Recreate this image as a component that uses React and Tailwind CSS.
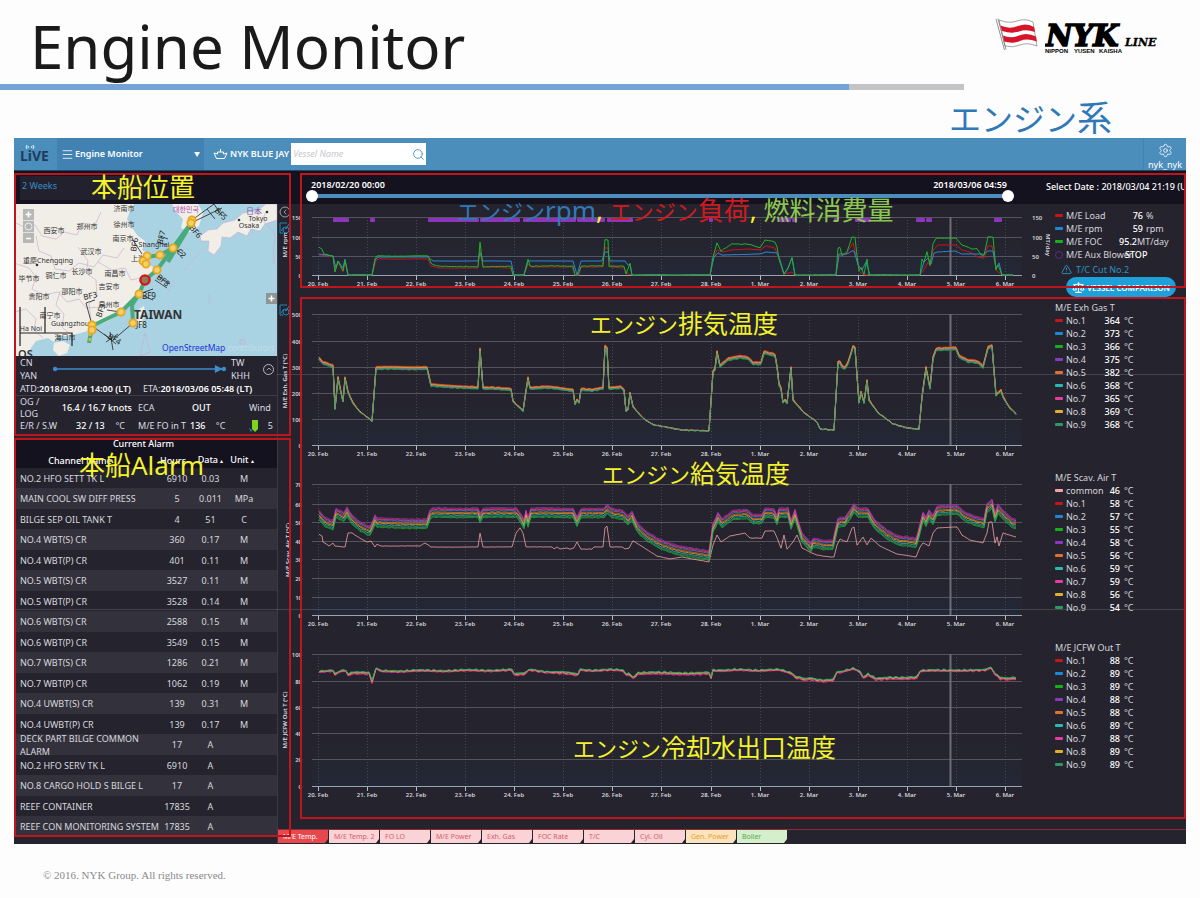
import React, { useState } from 'react';
import { ChevronLeft, ChevronUp, Menu, Scale, Search, Settings, TriangleAlert } from 'lucide-react';

const COLORS = ['#c4161c', '#1e88d8', '#17b01c', '#8a3ac0', '#e0702a', '#2ab8b0', '#e23c9c', '#e0b02c', '#2c9a66'];

const DAYS = [
  '20. Feb', '21. Feb', '22. Feb', '23. Feb', '24. Feb', '25. Feb', '26. Feb', '27. Feb',
  '28. Feb', '1. Mar', '2. Mar', '3. Mar', '4. Mar', '5. Mar', '6. Mar'
];

const ALARMS = [
  ['NO.2 HFO SETT TK L', '6910', '0.03', 'M'],
  ['MAIN COOL SW DIFF PRESS', '5', '0.011', 'MPa'],
  ['BILGE SEP OIL TANK T', '4', '51', 'C'],
  ['NO.4 WBT(S) CR', '360', '0.17', 'M'],
  ['NO.4 WBT(P) CR', '401', '0.11', 'M'],
  ['NO.5 WBT(S) CR', '3527', '0.11', 'M'],
  ['NO.5 WBT(P) CR', '3528', '0.14', 'M'],
  ['NO.6 WBT(S) CR', '2588', '0.15', 'M'],
  ['NO.6 WBT(P) CR', '3549', '0.15', 'M'],
  ['NO.7 WBT(S) CR', '1286', '0.21', 'M'],
  ['NO.7 WBT(P) CR', '1062', '0.19', 'M'],
  ['NO.4 UWBT(S) CR', '139', '0.31', 'M'],
  ['NO.4 UWBT(P) CR', '139', '0.17', 'M'],
  ['DECK PART BILGE COMMON ALARM', '17', 'A', ''],
  ['NO.2 HFO SERV TK L', '6910', 'A', ''],
  ['NO.8 CARGO HOLD S BILGE L', '17', 'A', ''],
  ['REEF CONTAINER', '17835', 'A', ''],
  ['REEF CON MONITORING SYSTEM', '17835', 'A', '']
];

const TABS = ['M/E Temp.', 'M/E Temp. 2', 'FO LO', 'M/E Power', 'Exh. Gas', 'FOC Rate', 'T/C', 'Cyl. Oil', 'Gen. Power', 'Boiler'];

const RPM = '319,254 333,256 336,268 338,261 343,268 345,259 348,275 372,275 375,260 378,257 428,257 433,261 478,261 480,253 483,261 511,261 514,275 524,275 528,261 573,261 577,275 581,261 602,261 605,252 608,252 610,261 625,261 628,265 630,265 632,275 710,275 714,257 718,253 722,255 760,254 766,252 777,253 780,260 784,274 788,268 792,258 795,275 836,275 839,254 847,254 852,251 854,251 858,265 862,270 866,262 870,275 920,275 924,262 928,258 931,264 934,253 938,252 955,251 962,254 984,254 988,251 993,251 996,268 999,263 1002,275 1013,275';
const LOAD = '319,255 333,256 335,272 338,262 343,272 345,262 348,275 372,275 376,260 380,259 428,259 431,266 440,268 478,268 480,250 483,267 511,268 513,275 524,275 528,264 531,267 572,267 575,275 579,275 581,267 602,267 605,248 608,248 610,267 624,268 628,274 632,275 710,275 713,258 717,250 722,252 732,250 748,249 760,250 766,246 775,248 778,256 784,274 792,272 795,275 836,275 839,256 846,254 853,243 856,256 860,272 864,275 920,275 924,270 928,262 930,266 933,250 938,245 956,245 962,250 970,252 978,257 984,258 988,246 992,246 996,270 1002,275 1013,275';
const FOC = '319,247 322,249 324,254 333,256 335,272 338,261 343,271 345,260 348,275 372,275 375,259 377,256 428,256 431,263 433,265 440,266 478,267 480,242 483,267 511,266 513,275 524,275 528,259 530,266 573,266 575,275 578,275 581,266 603,266 605,240 608,240 609,266 624,266 626,274 630,263 632,275 710,275 713,257 717,243 721,251 732,244 748,244 760,248 765,240 775,242 777,247 779,259 784,274 788,269 792,257 795,275 836,275 838,248 840,247 842,256 847,252 852,237 855,237 857,256 859,271 861,267 864,275 867,259 869,275 920,275 922,259 924,262 927,252 930,265 933,244 936,238 956,238 962,245 972,249 977,249 981,255 984,255 988,237 993,237 996,270 998,265 1002,275 1013,275';
const EXH = '319,358 323,363 333,366 335,409 338,378 343,402 345,378 348,392 353,403 360,412 372,421 376,368 427,368 431,385 478,388 480,349 483,388 511,389 513,401 523,411 528,378 530,388 545,387 573,390 575,404 577,400 579,403 581,389 592,390 603,388 605,347 607,348 609,388 621,387 624,390 626,411 628,410 630,393 633,407 643,418 653,425 670,428 683,430 709,431 713,372 715,369 717,352 720,366 728,359 740,357 748,358 753,363 761,363 764,352 775,355 777,367 779,384 781,388 783,403 785,400 787,403 791,368 793,400 803,412 817,422 820,429 834,430 838,362 840,362 842,367 845,368 848,363 853,347 855,348 859,403 861,392 864,403 867,381 869,400 878,413 893,424 907,428 919,429 922,397 923,390 926,368 930,388 933,358 936,349 956,348 959,356 968,361 978,362 983,367 988,348 992,346 996,395 1001,390 1003,397 1010,408 1016,414';
const COMMON = '319,534 322,536 323,542 329,546 333,543 335,546 345,547 348,533 352,533 358,537 367,542 371,541 375,547 377,544 380,546 420,546 425,543 431,547 478,547 480,533 483,547 512,547 516,533 520,528 523,533 526,547 552,547 554,549 557,547 560,549 567,548 570,549 574,548 577,542 581,549 592,549 594,547 603,547 605,528 607,526 610,547 622,547 625,549 629,548 633,541 643,547 657,556 670,559 682,557 709,562 713,545 717,535 721,542 730,536 745,533 750,538 762,538 765,531 774,531 777,538 781,548 784,535 787,549 793,542 797,535 802,548 812,553 817,555 830,557 834,557 837,545 840,539 847,542 852,528 854,527 857,545 863,537 867,545 871,538 880,546 897,554 916,557 920,547 923,543 929,546 933,533 937,528 957,527 962,535 970,540 983,543 987,533 989,522 992,522 995,543 997,537 999,546 1003,533 1016,537';
const SCAV = '319,515 325,522 333,525 336,513 344,517 347,512 352,520 360,527 370,531 375,520 377,523 427,524 430,515 433,513 478,513 480,518 483,513 513,513 516,512 522,520 524,525 526,515 528,522 531,513 573,513 577,522 581,513 604,513 607,509 612,513 623,515 628,521 632,516 637,527 647,537 660,544 677,550 709,556 713,528 718,518 722,523 733,515 747,514 753,519 762,519 765,513 774,514 777,521 779,513 788,513 791,525 795,514 798,525 802,538 811,548 813,543 823,545 833,545 838,523 845,522 850,515 854,508 858,513 868,513 875,525 887,535 900,541 916,543 918,537 923,517 926,522 929,515 933,520 937,511 957,510 965,517 977,522 984,523 987,508 992,504 995,517 998,509 1005,517 1012,523 1016,524';
const JCFW = '319,671 333,670 335,674 339,671 346,671 348,675 351,673 369,673 372,681 376,668 380,671 512,670 514,674 524,674 529,670 578,674 580,670 623,670 626,674 629,673 633,678 638,673 709,673 711,677 713,670 780,670 790,672 796,677 803,679 812,678 817,680 833,680 837,672 853,669 860,671 863,677 868,674 876,679 890,678 917,677 920,671 950,670 985,670 991,668 995,673 1000,678 1016,678';

const AUX_RUNS = [
  [333, 349], [370, 375], [428, 479], [480, 520], [523, 576], [577, 605], [607, 633], [709, 713], [778, 791],
  [792, 797], [834, 837], [855, 871], [916, 925], [926, 932], [994, 1002]
];

const parse = (text) => text.split(' ').map(p => p.split(',').map(Number));

// Fill long straight runs with extra samples so the sensor noise shows
const trace = (text, shift, noise, seed) => {
  const pts = parse(text);
  const out = [];
  pts.forEach(([x, y], i) => {
    const next = pts[i + 1];
    const steps = next ? Math.max(1, Math.round((next[0] - x) / 3)) : 1;
    for (let k = 0; k < steps; k++) {
      const px = next ? x + ((next[0] - x) * k) / steps : x;
      const py = next ? y + ((next[1] - y) * k) / steps : y;
      const n = Math.sin(px * 1.7) * Math.cos(px * 0.53) + 0.5 * Math.sin(px * 0.9 + seed * 2);
      out.push(`${px.toFixed(1)},${(py + shift(py) + n * noise).toFixed(1)}`);
    }
  });
  return out.join(' ');
};

const EXH_SHIFT = [-1.8, 0, 1.6, 0.8, -1.3, 0.6, 0.2, -0.6, 1];
const SCAV_SHIFT = [-4, -2.5, 4.5, -5, -0.8, 2, -3.5, 0.4, 3.5];
const JCFW_SHIFT = [1.1, 0.4, -0.2, 0.7, 0.2, -0.3, 0.8, 0, -0.5];

const exhLines = EXH_SHIFT.map((s, i) => ({
  color: COLORS[i],
  points: trace(EXH, y => s * Math.max(0.1, Math.min(1, (425 - y) / 45)), 0.5, i)
}));

const scavLines = [
  { color: '#f4a0a4', points: trace(COMMON, () => 0, 0.2, 1) },
  ...SCAV_SHIFT.map((s, i) => ({ color: COLORS[i], points: trace(SCAV, () => s, 0.6, i) }))
];

const jcfwLines = JCFW_SHIFT.map((s, i) => ({
  color: COLORS[i],
  points: trace(JCFW, y => (y > 672 ? s * 1.6 : s), 0.9, i)
}));

const mainLines = [
  { color: '#c4161c', points: trace(LOAD, () => 0, 0.2, 1) },
  { color: '#2f86d6', points: trace(RPM, () => 0, 0.1, 2) },
  { color: '#1fb526', points: trace(FOC, () => 0, 0.4, 3) }
];

const Chart = ({ top, height, ticks, lines, title, titleX, titleY, children }) => {
  const first = ticks[0][1];
  const base = ticks[ticks.length - 1][1];
  return (
    <svg viewBox={`277 ${top} 773 ${height}`} className="block min-w-0 flex-1" role="img" aria-label={title}>
      <defs>
        <linearGradient id={`fade${top}`} x1="0" y1="0" x2="0" y2="1">
          <stop offset="0" stopColor="#232734" stopOpacity="0" />
          <stop offset="1" stopColor="#22293a" stopOpacity="0.7" />
        </linearGradient>
      </defs>
      <rect x="312" y={base - 45} width="709" height="45" fill={`url(#fade${top})`} />
      {DAYS.map((day, i) => {
        const x = 318 + Math.round(i * 49.07);
        return (
          <g key={day}>
            <line x1={x + 0.5} x2={x + 0.5} y1={first} y2={base} stroke="#484752" strokeDasharray="1 2" />
            <line x1={x + 0.5} x2={x + 0.5} y1={base} y2={base + 5} stroke="#b4bac6" />
            <text x={x} y={base + 11} fontSize="6" fontWeight="600" fill="#d4d4da" textAnchor="middle">{day}</text>
          </g>
        );
      })}
      {ticks.map(([label, y]) => (
        <g key={label}>
          <line x1="312" x2="1022" y1={y + 0.5} y2={y + 0.5} stroke={y === base ? '#9aa2b2' : '#54535e'} />
          <text x="302" y={y + 3} fontSize="6" fontWeight="600" fill="#d4d4da" textAnchor="end">{label}</text>
        </g>
      ))}
      <line x1="950.5" x2="950.5" y1={first} y2={base} stroke="#6c6c76" strokeWidth="2" />
      {lines.map((line, i) => (
        <polyline key={i} points={line.points} fill="none" stroke={line.color} strokeWidth={lines.length > 3 ? 0.8 : 1} strokeLinejoin="round" />
      ))}
      <text transform={`translate(${titleX} ${titleY}) rotate(-90)`} fontSize="6" fontWeight="600" fill="#dcdce2" textAnchor="middle">{title}</text>
      {children}
    </svg>
  );
};

// Small "add chart" mark in the gutter
const GutterIcon = ({ y }) => (
  <g fill="none" stroke="#1c86b8" strokeWidth="1">
    <path d={`M287 ${y} h-7 v10 h3 M281 ${y + 8} l3 -4 2 2 3 -5`} />
    <circle cx="286" cy={y + 7} r="3" />
  </g>
);

const Swatch = ({ color }) => (
  <span className="h-[3px] w-2 shrink-0 rounded-[1px]" style={{ backgroundColor: color }} />
);

const TempLegend = ({ title, rows }) => (
  <div className="w-[136px] shrink-0 pt-[3px] pl-[5px] text-[9px] leading-[13px] text-[#d6d6dc]">
    <div>{title}</div>
    <ul>
      {rows.map(([name, value, color]) => (
        <li key={name} className="flex items-center">
          <Swatch color={color} />
          <span className="w-10 pl-[3px]">{name}</span>
          <span className="w-[17px] text-right font-medium text-white">{value}</span>
          <span className="pl-1">°C</span>
        </li>
      ))}
    </ul>
  </div>
);

const numbered = (values) => values.map((v, i) => [`No.${i + 1}`, v, COLORS[i]]);

const MainLegend = () => (
  <div className="w-[136px] shrink-0 pt-[5px] pl-[5px] text-[9px] leading-[13px] whitespace-nowrap text-[#d6d6dc]">
    {[
      ['M/E Load', '76', '%', '#c4161c', 'w-[28px] mr-[3px]'],
      ['M/E rpm', '59', 'rpm', '#1e88d8', 'w-[28px] mr-[3px]'],
      ['M/E FOC', '95.2', 'MT/day', '#17b01c', 'w-[22px]']
    ].map(([name, value, unit, color, valueClass]) => (
      <div key={name} className="flex items-center">
        <Swatch color={color} />
        <span className="w-[52px] pl-[3px]">{name}</span>
        <span className={`text-right font-medium text-white ${valueClass}`}>{value}</span>
        <span>{unit}</span>
      </div>
    ))}
    <div className="flex items-center">
      <span className="size-2 shrink-0 rounded-full border border-[#5a2d86]" />
      <span className="w-[62px] pl-[3px]">M/E Aux Blower</span>
      <span className="font-medium text-white">STOP</span>
    </div>
    <div className="flex h-4 items-center gap-1 pl-[6px] text-[#2a93c4]">
      <TriangleAlert size={11} strokeWidth={2} />
      T/C Cut No.2
    </div>
    <button className="ml-[11px] flex h-5 w-[110px] items-center gap-[2px] overflow-hidden rounded-full bg-[#1ea0da] pl-[6px] text-[8px] font-semibold text-white">
      <Scale size={13} strokeWidth={2} className="shrink-0" />
      VESSEL COMPARISON
    </button>
  </div>
);

// Slide note: kana are set smaller than kanji
const Note = ({ kana, text, className = '' }) => (
  <div className={`pointer-events-none absolute z-20 leading-8 whitespace-nowrap text-[#f4f22c] ${className}`}>
    {kana && <span className="text-[22px]">{kana}</span>}{text}
  </div>
);

const Frame = ({ className }) => (
  <div className={`pointer-events-none absolute z-10 border-2 border-[#c0151d] ${className}`} />
);

const CITIES = [
  ['西安市', 54, 233], ['郑州市', 87, 229], ['徐州市', 124, 227], ['南京市', 123, 241], ['武汉市', 91, 254],
  ['重慶Chengqing', 48, 263], ['长沙市', 82, 274], ['南昌市', 115, 276], ['铜仁市', 56, 278], ['毕节市', 29, 281],
  ['吉安市', 109, 289], ['邵阳市', 72, 294], ['贵阳市', 39, 299], ['泉州市', 109, 307], ['南宁市', 50, 318],
  ['Guangzhou', 70, 326], ['海口市', 65, 340], ['Ha Noi', 31, 331], ['济南市', 124, 211], ['上海', 138, 261],
  ['Shanghai', 154, 247]
];

const STOPS = [
  [192, 220], [191, 223], [173, 248], [160, 255], [147, 256], [143, 261], [146, 264], [157, 270], [139, 294],
  [121, 312], [133, 323], [92, 325], [92, 330]
];

const VoyageMap = () => (
  <svg viewBox="14 204 263 152" className="block w-full" role="img" aria-label="Map">
    <rect x="14" y="204" width="263" height="152" fill="#a9d2e2" />
    <path d="M14 204 H134 L130 211 127 219 132 228 138 236 145 241 142 250 148 253 143 262 153 267 152 276 144 286 139 294 131 305 122 312 108 321 96 326 88 331 77 334 66 336 58 336 54 342 48 338 36 341 31 348 26 356 H14 Z" fill="#f1eee8" />
    <path d="M54 343 l9 -2 7 4 -3 8 -8 3 -6 -6z M172 204 h26 l5 9 -4 13 -9 6 -9 -4 2 -9 -7 -7z M139 309 l5 -3 1 7 -4 13 -4 -7z" fill="#f1eee8" />
    <path d="M200 236 l8 -6 9 -1 6 -6 12 -3 8 -7 14 -2 9 -7 h11 v16 l-12 4 -5 7 -9 -2 -4 7 -9 -4 -8 6 -8 -1 -1 9 -7 9 -6 -4 1 -10 -8 0z" fill="#f1eee8" stroke="#c3a5cf" strokeWidth="0.5" />
    <g fill="none" stroke="#c9b0cf" strokeWidth="0.7">
      <path d="M14 222 l12 6 9 -3 7 11 14 3 8 -7 13 3 5 -12 13 2 6 -13" />
      <path d="M36 236 l3 15 12 5 4 13 14 2 10 -8 15 4 9 -12 14 3 7 -10" />
      <path d="M14 263 l15 5 7 9 -4 12 12 6 14 -3 9 10 12 -3 7 9 15 -1" />
      <path d="M78 247 l10 14 -2 12 10 7 1 16 -8 8 2 16 M98 262 l14 8 13 -2 6 12 14 -3" />
      <path d="M14 312 l12 -3 10 10 -2 11 9 8 M60 291 l-4 14 8 9 -2 13 9 8" />
      <path d="M266 212 q-6 9 3 15 q9 7 4 21 l1 16 M140 356 l5 -23 5 19z M207 293 q5 4 1 10 M240 340 h5 v4 h-5z" />
      <path d="M185 270 q9 -14 21 -22 M168 292 q5 -11 10 -17" strokeDasharray="3 2" />
    </g>
    <path d="M20 307 V346 M20 333 H72 V346 M45 307 V333" stroke="#222" strokeWidth="1.2" fill="none" />
    <g fill="none" stroke="#44a878" strokeWidth="4" strokeLinejoin="round" opacity="0.95">
      <path d="M192 222 L173 248 160 255 147 257" />
      <path d="M192 222 L157 270 145 280 139 294 121 312 92 326 89 343" />
      <path d="M139 294 L132 305 133 323" />
      <path d="M192 222 L168 262" />
    </g>
    <g stroke="#222" strokeWidth="0.8" fill="none">
      <path d="M192 220 L214 204 M193 222 L222 208 M214 204 l8 12 M207 209 l8 10 M92 325 l-6 -22 9 -3 M92 326 l20 14 M133 323 l-20 17 M139 294 l14 6 M139 294 l14 -5 M121 312 l-14 -2 M142 254 l-9 -14 M173 248 l10 6" />
      <path d="M104 334 l12 10 M106 342 l12 -8 M110 332 l3 18 M155 280 l12 8 M158 276 l12 8 M160 236 l8 3 M158 242 l8 3" />
    </g>
    <g fontSize="8" fill="#222">
      <text x="84" y="300" transform="rotate(-12 84 300)">BF3</text>
      <text x="136" y="252" transform="rotate(-80 136 252)">BF6</text>
      <text x="189" y="228" transform="rotate(50 189 228)">BF6</text>
      <text x="214" y="211" transform="rotate(45 214 211)">BF5</text>
      <text x="156" y="278" transform="rotate(40 156 278)">BF8</text>
      <text x="176" y="252" transform="rotate(45 176 252)">C2</text>
      <text x="157" y="238" transform="rotate(-75 164 238)">BF7</text>
      <text x="101" y="318" transform="rotate(-70 101 318)">BF3</text>
      <text x="107" y="338" transform="rotate(30 107 338)">BF4</text>
      <text x="136" y="328">JF8</text>
      <text x="142" y="299">BF9</text>
    </g>
    <g fontSize="7" fill="#333" textAnchor="middle">
      {CITIES.map(([name, x, y]) => <text key={name} x={x} y={y}>{name}</text>)}
      <text x="258" y="221">Tokyo</text>
      <text x="249" y="228">Osaka</text>
      <text x="254" y="214" fontSize="8" fill="#8a5aa8">日本</text>
      <text x="186" y="212" fontSize="7" fill="#b04fb0">대한민국</text>
    </g>
    <g fill="#333">
      <circle cx="239" cy="220" r="1.3" /><circle cx="267" cy="212" r="1.3" /><circle cx="37" cy="265" r="1.3" />
    </g>
    <text x="134" y="319" fontSize="12" fontWeight="700" fill="#333">TAIWAN</text>
    <text x="18" y="358" fontSize="11" fontWeight="600" fill="#333">OS</text>
    {STOPS.map(([x, y]) => (
      <circle key={`${x}-${y}`} cx={x} cy={y} r="3.6" fill="#f6cf6a" stroke="#e9a81c" strokeWidth="1.8" />
    ))}
    <path d="M90 333 v10" stroke="#e9b52c" strokeWidth="2.5" strokeDasharray="3 2" />
    <circle cx="145" cy="280" r="4.6" fill="#8f7a55" stroke="#d8151c" strokeWidth="2.4" />
    <g>
      <path d="M23 209 h11 v34 h-11z" fill="#a9a9a9" opacity="0.8" />
      <path d="M28.500 211.500 v6 M25.500 214.500 h6 M26 238.500 h5" stroke="#fff" strokeWidth="1.6" />
      <circle cx="28.500" cy="226.500" r="3.500" fill="none" stroke="#eee" />
      <path d="M23 220.500 h11 M23 232.500 h11" stroke="#fff" strokeWidth="0.6" />
      <path d="M266 293 h11 v11 h-11z" fill="#8f9496" />
      <path d="M271.500 295.500 v6 M268.500 298.500 h6" stroke="#fff" strokeWidth="1.6" />
    </g>
    <text x="162" y="351" fontSize="8.5" fill="#1c34d8">OpenStreetMap</text>
    <text x="228" y="351" fontSize="8" fill="#c2dfea">contributors</text>
  </svg>
);

const VoyagePanel = () => (
  <div className="h-[82px] bg-[#25242e] text-[9px] leading-3 text-[#dcdce2]">
    <div className="flex h-[26px] items-center pl-[6px]">
      <div className="w-8 leading-[13px]">CN<br />YAN</div>
      <svg viewBox="0 0 174 10" className="min-w-0 flex-1" aria-hidden="true">
        <path d="M3 5 H171" stroke="#3b8ccb" strokeWidth="1.5" />
        <circle cx="3" cy="5" r="2.2" fill="#3b8ccb" />
        <circle cx="171" cy="5" r="2.2" fill="#3b8ccb" />
        <path d="M162 1 L170 5 162 9z" fill="#3b8ccb" />
      </svg>
      <div className="ml-1 w-7 leading-[13px]">TW<br />KHH</div>
      <button aria-label="Collapse" className="mr-[3px] ml-1 flex size-[11px] items-center justify-center rounded-full border border-[#b8b8c0]">
        <ChevronUp size={8} />
      </button>
    </div>
    <div className="flex h-[14px] items-center gap-3 border-b border-[#3d3c47] pl-[6px] whitespace-nowrap">
      <span>ATD:<b className="font-semibold text-white">2018/03/04 14:00 (LT)</b></span>
      <span>ETA:<b className="font-semibold text-white">2018/03/06 05:48 (LT)</b></span>
    </div>
    <div className="grid h-[21px] grid-cols-[36px_76px_50px_1fr_28px] items-center pl-[6px]">
      <span>OG /<br />LOG</span>
      <span className="text-right font-medium whitespace-nowrap text-white">16.4 / 16.7 knots</span>
      <span className="pl-[6px]">ECA</span>
      <span className="pl-[10px] font-medium text-white">OUT</span>
      <span>Wind</span>
    </div>
    <div className="grid h-[18px] grid-cols-[54px_64px_50px_1fr_28px] items-center pl-[6px] whitespace-nowrap">
      <span>E/R / S.W</span>
      <span className="flex justify-between pr-[13px] pl-[2px]"><b className="font-medium text-white">32 / 13</b> °C</span>
      <span>M/E FO in T</span>
      <span className="pl-[2px]"><b className="pr-2 font-medium text-white">136</b> °C</span>
      <span className="flex items-center justify-between pr-1">
        <svg viewBox="0 0 10 14" className="h-[14px] w-[10px]" aria-hidden="true">
          <path d="M3 1 h6 v9 l-3 3 -3 -3z" fill="#7ed321" />
          <path d="M0 9 l3 2 -1 2z" fill="#2f86d6" />
        </svg>
        5
      </span>
    </div>
  </div>
);

const AlarmPanel = () => (
  <div className="pb-[7px]">
    <table className="w-full table-fixed border-collapse text-center text-[9px] leading-[13px] text-[#d8d8de]">
      <caption className="h-[14px] bg-[#14121e] pr-1 text-center text-[9px] leading-3 font-medium text-white">Current Alarm</caption>
      <colgroup>
        <col />
        <col className="w-[38px]" />
        <col className="w-[29px]" />
        <col className="w-[52px]" />
      </colgroup>
      <thead className="bg-[#14121e] text-white">
        <tr className="h-4">
          <th className="p-0 pr-3 font-medium">Channel Name</th>
          <th className="p-0 pr-2 font-medium">Hours</th>
          <th className="p-0 font-medium whitespace-nowrap">Data <span className="text-[6px]">▴</span></th>
          <th className="p-0 pr-[18px] font-medium whitespace-nowrap">Unit <span className="text-[6px]">▴</span></th>
        </tr>
      </thead>
      <tbody>
        {ALARMS.map(([name, hours, data, unit]) => (
          <tr key={name} className="odd:h-5 even:h-[21px] odd:bg-[#25242e] even:bg-[#33323c]">
            <td className="p-0 pl-[6px] text-left">
              <div className="flex h-5 w-[142px] items-center">{name}</div>
            </td>
            <td className="p-0">{hours}</td>
            <td className="p-0">{data}</td>
            <td className="p-0 pr-[14px]">{unit}</td>
          </tr>
        ))}
      </tbody>
    </table>
  </div>
);

const AppHeader = () => (
  <header className="flex h-[33px] items-stretch border-b border-[#1d4a68] bg-[#4b8dbb] text-[9px] font-semibold text-white">
    <div className="flex w-[43px] items-center justify-center pt-[2px]">
      <svg viewBox="0 0 34 20" className="h-5 w-[34px]" role="img" aria-label="LIVE">
        <text x="1" y="16" fontSize="14" fontWeight="700" fill="#1d3d5c">LiVE</text>
        <path d="M8 4 q-2 -2 0 -4 M14 4 q2 -2 0 -4 M9.500 3 q-1 -1 0 -2 M12.500 3 q1 -1 0 -2" stroke="#fff" fill="none" strokeWidth="0.9" />
      </svg>
    </div>
    <button className="flex w-[147px] items-center bg-[#4182b3] pl-1">
      <Menu size={13} strokeWidth={1.5} />
      <span className="flex-1 pl-[1px] text-left">Engine Monitor</span>
      <span className="pr-1 text-[6px]">▼</span>
    </button>
    <div className="flex items-center gap-[2px] pl-[9px] whitespace-nowrap">
      <svg viewBox="0 0 15 12" className="h-3 w-[15px]" fill="none" stroke="#fff" strokeWidth="1" aria-hidden="true">
        <path d="M1 5 L3.500 10.500 H11.500 L14 5 L10.500 6 V4 H4.500 V6 Z M7.500 4 V1" />
      </svg>
      NYK BLUE JAY
    </div>
    <form className="my-[5px] ml-[2px] flex w-[135px] bg-white" onSubmit={(e) => e.preventDefault()}>
      <input
        type="text"
        aria-label="Vessel Name"
        placeholder="Vessel Name"
        className="min-w-0 flex-1 px-[2px] text-[9px] font-normal text-gray-800 italic placeholder:text-[#c8c8cc]"
      />
      <button aria-label="Search" className="flex w-4 items-center justify-center text-[#3d86b8]">
        <Search size={13} strokeWidth={1.5} />
      </button>
    </form>
    <button className="ml-auto flex w-[43px] flex-col items-center justify-end border-l border-[#4384b1] text-[9px] leading-[10px] font-normal">
      <Settings size={15} strokeWidth={1.3} className="mb-[2px]" />
      nyk_nyk
    </button>
  </header>
);

const THUMB = 'pointer-events-none absolute inset-0 w-full appearance-none bg-transparent [&::-webkit-slider-thumb]:pointer-events-auto [&::-webkit-slider-thumb]:size-3 [&::-webkit-slider-thumb]:appearance-none [&::-webkit-slider-thumb]:rounded-full [&::-webkit-slider-thumb]:bg-white';

const Timeline = () => {
  const [from, setFrom] = useState(0);
  const [to, setTo] = useState(100);

  return (
    <div className="flex h-[33px] bg-[#14121e] text-[9px] font-semibold text-white">
      <div className="flex min-w-0 flex-1 flex-col pt-2 pr-[36px] pl-[29px]">
        <div className="flex justify-between pr-[7px] pl-[5px] leading-[11px]">
          <span>2018/02/20 00:00</span>
          <span>2018/03/06 04:59</span>
        </div>
        <div className="relative h-3">
          <div className="mx-1 mt-1 h-1 bg-[#4b8dbb]" />
          <input type="range" aria-label="From" value={from} onChange={(e) => setFrom(Number(e.target.value))} className={THUMB} />
          <input type="range" aria-label="To" value={to} onChange={(e) => setTo(Number(e.target.value))} className={THUMB} />
        </div>
      </div>
      <div className="-ml-1 w-[140px] shrink-0 overflow-hidden pt-[10px] text-[9px] leading-3 font-medium whitespace-nowrap">Select Date : 2018/03/04 21:19 (U</div>
    </div>
  );
};

const tabColor = (i) => {
  if (i === 0) return 'bg-[#e5484d] text-white';
  if (i === 8) return 'bg-[#fbe3bd] text-[#e8a02c]';
  if (i === 9) return 'bg-[#d5efcd] text-[#58a848]';
  return 'bg-[#f9d3d5] text-[#d8606a]';
};

const NykLogo = () => (
  <div className="flex gap-1 pt-4">
    <svg viewBox="0 0 46 36" className="h-9 w-[46px]" role="img" aria-label="NYK flag">
      <path d="M4 4 Q14 8 22 5 T38 6 L42 30 Q32 26 25 29 T10 30 Z" fill="#fff" stroke="#8d8d8d" strokeWidth="0.8" />
      <path d="M5.500 9.500 Q14 13.500 23 10 T39 11 L40 16 Q31 13 24 15.500 T7 15 Z M8 19.500 Q16 23 24 19.500 T41 20.500 L41.800 25.500 Q32 22 25 25 T9 25.500 Z" fill="#d8142a" />
      <path d="M1 3 L9.500 34 M3 2.500 L11 33.500" stroke="#777" strokeWidth="0.8" />
    </svg>
    <svg viewBox="0 0 116 38" className="h-[38px] w-[116px] font-['DejaVu_Serif']" role="img" aria-label="NYK LINE">
      <text x="1" y="30" fontSize="29" fontWeight="700" fontStyle="italic" stroke="#000" strokeWidth="1.6">NYK</text>
      <text x="80" y="30" fontSize="11" fontWeight="700" fontStyle="italic" stroke="#000" strokeWidth="0.3">LINE</text>
      <text x="0" y="37" fontSize="6" fontWeight="700" className="font-['Liberation_Sans']">NIPPON</text>
      <text x="29" y="37" fontSize="6" fontWeight="700" className="font-['Liberation_Sans']">YUSEN</text>
      <text x="54" y="37" fontSize="6" fontWeight="700" className="font-['Liberation_Sans']">KAISHA</text>
    </svg>
  </div>
);

export default function App() {
  const [tab, setTab] = useState(0);

  return (
    <div className="min-h-screen bg-[#fdfdfd] font-['Noto_Sans','Noto_Sans_CJK_JP',sans-serif]">
      <div className="flex h-[84px] justify-between pr-[39px] pl-[30px]">
        <h1 className="relative z-10 pt-1 text-[60px] leading-[84px] text-[#1a1a1a]">Engine Monitor</h1>
        <NykLogo />
      </div>
      <div className="flex h-[6px]">
        <div className="flex-[849] bg-[#74a4d6]" />
        <div className="flex-[115] bg-[#c4c4c6]" />
        <div className="flex-[236]" />
      </div>
      <h2 className="h-12 pt-1 pr-[88px] text-right text-[35px] leading-[48px] text-[#3079b8]">
        <span className="text-[32px]">エンジン</span>系
      </h2>

      <div className="relative mx-[14px] bg-[#25242e]">
        <AppHeader />
        <div className="flex">
          <aside className="w-[263px] shrink-0">
            <section className="relative">
              <div className="h-[33px] bg-[#14121e] px-[6px] pt-[5px]">
                <select aria-label="Period" className="block h-6 w-[126px] appearance-none bg-[#23212e] pb-1 pl-[2px] text-[9px] text-[#3490c4]">
                  <option>2 Weeks</option>
                </select>
              </div>
              <VoyageMap />
              <VoyagePanel />
              <Frame className="top-[2px] -right-[14px] bottom-[2px] left-0" />
              <Note text="本船位置" className="top-0 left-[77px] text-[26px]" />
            </section>
            <section className="relative">
              <AlarmPanel />
              <Frame className="top-0 -right-[14px] bottom-[7px] left-0" />
              <Note text="本船Alarm" className="top-[11px] left-[65px] text-[26px]" />
            </section>
          </aside>

          <main className="min-w-0 flex-1 border-l border-[#3a3944]">
            <section className="relative -ml-px">
              <Timeline />
              <div className="flex h-[94px]">
                <Chart top={204} height={94} ticks={[['150', 217], ['100', 237], ['50', 256], ['0', 275]]} lines={mainLines} title="M/E rpm" titleX={287} titleY={245}>
                  <circle cx="285" cy="212" r="5" fill="none" stroke="#a0a0a8" />
                  <ChevronLeft x={281} y={208} size={8} color="#d0d0d6" />
                  <GutterIcon y={223} />
                  {AUX_RUNS.map(([a, b]) => (
                    <rect key={a} x={a} y="218" width={b - a} height="4" rx="1" fill="#8d35bd" />
                  ))}
                  {[['150', 217], ['100', 237], ['50', 256], ['0', 275]].map(([label, y]) => (
                    <text key={label} x="1032" y={y + 3} fontSize="6" fontWeight="600" fill="#d4d4da">{label}</text>
                  ))}
                  <text transform="translate(1046 245) rotate(90)" fontSize="6" fontWeight="600" fill="#dcdce2" textAnchor="middle">MT/day</text>
                </Chart>
                <MainLegend />
              </div>
              <Frame className="top-[2px] right-0 bottom-[10px] left-[23px]" />
              <div className="pointer-events-none absolute top-[23px] left-[180px] z-20 flex items-baseline text-[26px] leading-8 whitespace-nowrap">
                <span className="text-[#3079b8]"><span className="text-[22px]">エンジン</span>rpm</span>
                <span className="text-[#f4f22c]">,&nbsp;</span>
                <span className="text-[#cf1a20]"><span className="text-[22px]">エンジン</span>負荷</span>
                <span className="text-[#f4f22c]">,&nbsp;</span>
                <span className="text-[#8cc751]">燃料消費量</span>
              </div>
            </section>

            <section className="relative -ml-px">
              <div className="flex h-[170px]">
                <Chart top={298} height={170} ticks={[['500', 314], ['400', 341], ['300', 367], ['200', 393], ['100', 419], ['0', 445]]} lines={exhLines} title="M/E Exh. Gas T (°C)" titleX={287} titleY={381}>
                  <GutterIcon y={305} />
                </Chart>
                <TempLegend title="M/E Exh Gas T" rows={numbered([364, 373, 366, 375, 382, 368, 365, 369, 368])} />
              </div>
              <div className="flex h-[170px]">
                <Chart top={468} height={170} ticks={[['70', 484], ['60', 504], ['50', 522], ['40', 541], ['30', 559], ['20', 578], ['10', 597], ['0', 615]]} lines={scavLines} title="M/E Scav. Air T (°C)" titleX={290} titleY={550} />
                <TempLegend title="M/E Scav. Air T" rows={[['common', 46, '#f4a0a4'], ...numbered([58, 57, 55, 58, 56, 59, 59, 56, 54])]} />
              </div>
              <div className="flex h-[191px]">
                <Chart top={638} height={191} ticks={[['100', 654], ['80', 681], ['60', 707], ['40', 733], ['20', 759], ['0', 786]]} lines={jcfwLines} title="M/E JCFW Out T (°C)" titleX={287} titleY={720} />
                <TempLegend title="M/E JCFW Out T" rows={numbered([88, 89, 89, 88, 88, 89, 88, 89, 89])} />
              </div>
              <div className="absolute top-[76px] right-0 left-0 h-px bg-white/15" />
              <Frame className="-top-px right-0 bottom-[10px] left-[23px]" />
              <Note kana="エンジン" text="排気温度" className="top-[9px] left-[313px] text-[25px]" />
              <Note kana="エンジン" text="給気温度" className="top-[159px] left-[325px] text-[25px]" />
              <Note kana="エンジン" text="冷却水出口温度" className="top-[433px] left-[296px] text-[25px]" />
            </section>

            <nav className="-ml-px flex h-[14px] gap-px border-t border-[#8f2a30] pl-px">
              {TABS.map((name, i) => (
                <button
                  key={name}
                  aria-pressed={tab === i}
                  onClick={() => setTab(i)}
                  className={`w-[50px] pl-[5px] text-left text-[7px] leading-3 whitespace-nowrap [clip-path:polygon(0_0,100%_0,100%_70%,94%_100%,0_100%)] ${tabColor(i)}`}
                >
                  {name}
                </button>
              ))}
            </nav>
          </main>
        </div>
        <div className="absolute top-[471px] right-0 left-0 h-px bg-white/15" />
      </div>

      <footer className="px-[43px] pt-6 font-['Liberation_Serif',serif] text-[11px] leading-[14px] text-[#8a8a8a]">
        © 2016. NYK Group. All rights reserved.
      </footer>
    </div>
  );
}
